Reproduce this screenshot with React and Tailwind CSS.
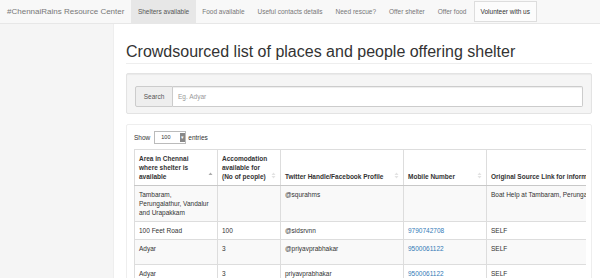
import React from 'react';

const navLinks = ['Food available', 'Useful contacts details', 'Need rescue?', 'Offer shelter', 'Offer food'];

const rows = [
  {
    area: ['Tambaram,', 'Perungalathur, Vandalur', 'and Urapakkam'],
    count: '',
    handle: '@squrahms',
    mobile: '',
    source: 'Boat Help at Tambaram, Perungalathur, Vandalur and Urapakkam',
    h: 'h-[35px]',
  },
  { area: ['100 Feet Road'], count: '100', handle: '@sidsrvnn', mobile: '9790742708', source: 'SELF', h: 'h-[17px]' },
  { area: ['Adyar'], count: '3', handle: '@priyavprabhakar', mobile: '9500061122', source: 'SELF', h: 'h-[25px]' },
  { area: ['Adyar'], count: '3', handle: 'priyavprabhakar', mobile: '9500061122', source: 'SELF', h: 'h-[25px]' },
];

// little sort arrows at the bottom-right of a header cell
const SortIcon = ({ active }) => (
  <svg width="5" height="7" viewBox="0 0 5 7" className="absolute right-[4px] bottom-[6px]">
    <path d="M2.5 0.5 L4.5 3 L0.5 3 Z" fill={active ? '#aaa' : '#e3e3e3'} />
    {!active && <path d="M2.5 6.5 L4.5 4 L0.5 4 Z" fill="#e3e3e3" />}
  </svg>
);

const Th = ({ children, active, className = '' }) => (
  <th
    className={`relative border border-[#ddd] border-b-[#c8c8c8] px-[4px] pb-[4px] pt-[4px] pr-[12px] text-left align-bottom font-bold text-[#333] ${className}`}
  >
    {children}
    <SortIcon active={active} />
  </th>
);

export default function App() {
  return (
    <div className="w-[600px] h-[278px] overflow-hidden bg-white font-['Liberation_Sans',Arial,sans-serif]">
      {/* Navbar */}
      <div className="flex h-[24px] items-stretch border-b border-[#e7e7e7] bg-[#f8f8f8]">
        <div className="flex items-center pl-[7px] pr-[7px] text-[8px] text-[#777]">#ChennaiRains Resource Center</div>
        <div className="flex items-center bg-[#e7e7e7] px-[6.5px] text-[6.5px] text-[#555]">Shelters available</div>
        {navLinks.map((l) => (
          <div key={l} className="flex items-center px-[6.5px] text-[6.5px] text-[#777]">
            {l}
          </div>
        ))}
        <div className="ml-[1px] flex items-center py-[1px]">
          <div className="flex h-full items-center border border-[#ddd] bg-[#fcfcfc] px-[5.5px] text-[6.5px] text-[#333]">
            Volunteer with us
          </div>
        </div>
      </div>

      <div className="flex h-[254px]">
        {/* Sidebar */}
        <div className="w-[114px] shrink-0 border-r border-[#eee] bg-[#f5f5f5]"></div>

        {/* Main */}
        <div className="flex-1 min-w-0 pl-[12px] pr-[8px]">
          <div className="mt-[19px] border-b border-[#eee] pb-[3px]">
            <h1 className="text-[16px] leading-[17px] text-[#333]">Crowdsourced list of places and people offering shelter</h1>
          </div>

          {/* Search well */}
          <div className="mt-[9px] rounded-[2px] border border-[#e3e3e3] bg-[#f5f5f5] px-[8px] pt-[12px] pb-[6px] shadow-[inset_0_1px_1px_rgba(0,0,0,0.05)]">
            <div className="flex h-[21px] text-[6.5px]">
              <div className="flex w-[38px] items-center justify-center rounded-l-[2px] border border-[#ccc] bg-[#eee] text-[#555]">
                Search
              </div>
              <div className="flex flex-1 items-center rounded-r-[2px] border border-l-0 border-[#ccc] bg-white pl-[5px] text-[#999] shadow-[inset_0_1px_1px_rgba(0,0,0,0.075)]">
                Eg. Adyar
              </div>
            </div>
          </div>

          {/* Table panel */}
          <div className="mt-[10px] h-[200px] rounded-[2px] border border-[#eee] bg-white pl-[7px] pr-[5px] pt-[6px]">
            <div className="flex h-[13px] items-center text-[6.5px] text-[#333]">
              <span>Show</span>
              <div className="ml-[4px] flex h-[13px] w-[32px] items-center border border-[#bbb] bg-white">
                <span className="flex-1 pl-[6px] text-[5.5px]">100</span>
                <div className="flex h-[9px] w-[5px] items-center justify-center bg-[#888] text-[5px] leading-none text-white">
                  ▾
                </div>
              </div>
              <span className="ml-[2px]">entries</span>
            </div>

            <div className="mt-[5px] overflow-hidden">
              <table className="w-[600px] table-fixed border-collapse text-[6.5px] leading-[9px] text-[#333]">
                <colgroup>
                  <col className="w-[83px]" />
                  <col className="w-[63px]" />
                  <col className="w-[123px]" />
                  <col className="w-[83px]" />
                  <col className="w-[248px]" />
                </colgroup>
                <thead>
                  <tr>
                    <Th active>
                      Area in Chennai
                      <br />
                      where shelter is
                      <br />
                      available
                    </Th>
                    <Th>
                      Accomodation
                      <br />
                      available for
                      <br />
                      (No of people)
                    </Th>
                    <Th>Twitter Handle/Facebook Profile</Th>
                    <Th>Mobile Number</Th>
                    <Th className="whitespace-nowrap">Original Source Link for information</Th>
                  </tr>
                </thead>
                <tbody>
                  {rows.map((r, i) => (
                    <tr key={i} className={i % 2 === 0 ? 'bg-[#f9f9f9]' : 'bg-white'}>
                      <td className={`border border-[#ddd] p-[4px] align-top ${r.h}`}>
                        {r.area.map((a, j) => (
                          <div key={j}>{a}</div>
                        ))}
                      </td>
                      <td className="border border-[#ddd] p-[4px] align-top">{r.count}</td>
                      <td className="border border-[#ddd] p-[4px] align-top">{r.handle}</td>
                      <td className="border border-[#ddd] p-[4px] align-top text-[#337ab7]">{r.mobile}</td>
                      <td className="border border-[#ddd] p-[4px] align-top whitespace-nowrap">{r.source}</td>
                    </tr>
                  ))}
                </tbody>
              </table>
            </div>
          </div>
        </div>
      </div>
    </div>
  );
}
